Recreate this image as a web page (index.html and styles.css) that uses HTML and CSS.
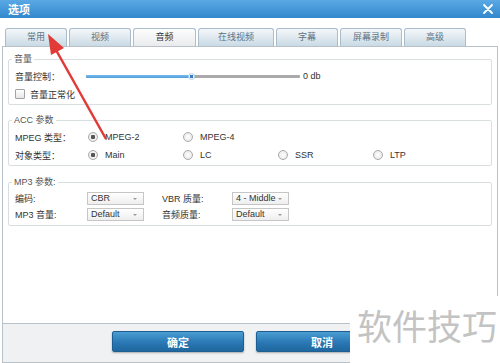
FILE: index.html
```html
<!DOCTYPE html>
<html lang="zh-CN">
<head>
    <meta charset="UTF-8">
    <meta name="viewport" content="width=device-width, initial-scale=1.0">
    <title>选项</title>
    <link rel="stylesheet" href="styles.css">
</head>
<body>
    <div class="dialog">
        <div class="titlebar">
            <span class="title">选项</span>
            <svg class="close" width="10" height="10" viewBox="0 0 10 10">
                <path d="M1 1 L9 9 M9 1 L1 9" stroke="#ffffff" stroke-width="1.8" stroke-linecap="round"/>
            </svg>
        </div>

        <div class="main">
            <div class="tabs">
                <div class="tab">常用</div>
                <div class="tab">视频</div>
                <div class="tab active">音频</div>
                <div class="tab wide">在线视频</div>
                <div class="tab">字幕</div>
                <div class="tab">屏幕录制</div>
                <div class="tab">高级</div>
            </div>

            <div class="panel">
                <fieldset class="group group-vol">
                    <legend>音量</legend>
                    <div class="row">
                        <span class="label">音量控制：</span>
                        <div class="slider">
                            <div class="fill"></div>
                            <div class="thumb"></div>
                        </div>
                        <span class="db">0 db</span>
                    </div>
                    <div class="row">
                        <span class="checkbox"></span>
                        <span class="check-text">音量正常化</span>
                    </div>
                </fieldset>

                <fieldset class="group group-acc">
                    <legend>ACC 参数</legend>
                    <div class="row">
                        <span class="label">MPEG 类型：</span>
                        <div class="opts">
                            <span class="opt"><span class="radio checked"></span>MPEG-2</span>
                            <span class="opt"><span class="radio"></span>MPEG-4</span>
                        </div>
                    </div>
                    <div class="row">
                        <span class="label">对象类型：</span>
                        <div class="opts">
                            <span class="opt"><span class="radio checked"></span>Main</span>
                            <span class="opt"><span class="radio"></span>LC</span>
                            <span class="opt"><span class="radio"></span>SSR</span>
                            <span class="opt"><span class="radio"></span>LTP</span>
                        </div>
                    </div>
                </fieldset>

                <fieldset class="group group-mp3">
                    <legend>MP3 参数:</legend>
                    <div class="row row-mp3">
                        <span class="label">编码:</span>
                        <span class="select">CBR</span>
                        <span class="label label2">VBR 质量:</span>
                        <span class="select">4 - Middle</span>
                    </div>
                    <div class="row row-mp3">
                        <span class="label">MP3 音量:</span>
                        <span class="select">Default</span>
                        <span class="label label2">音频质量:</span>
                        <span class="select">Default</span>
                    </div>
                </fieldset>
            </div>
        </div>

        <div class="footer">
            <button class="btn">确定</button>
            <button class="btn">取消</button>
        </div>

        <div class="watermark">软件技巧</div>

        <!-- red annotation arrow pointing at the first tab -->
        <svg class="arrow" width="500" height="363" viewBox="0 0 500 363">
            <line x1="106" y1="139" x2="56" y2="50" stroke="#e23a36" stroke-width="2.5"/>
            <polygon points="48,34 64,48 51,55" fill="#e23a36"/>
        </svg>
    </div>
</body>
</html>
```

FILE: styles.css
```css
* {
    margin: 0;
    padding: 0;
    box-sizing: border-box;
}

body {
    font-family: "Liberation Sans", "Noto Sans CJK SC", sans-serif;
    font-size: 9px;
    color: #333333;
    background: #ffffff;
    width: 500px;
    height: 363px;
    overflow: hidden;
}

.dialog {
    position: relative;
    width: 500px;
    height: 363px;
    background: #ffffff;
}

.titlebar {
    height: 18px;
    background: linear-gradient(#5aa8e4, #3188cd);
    display: flex;
    align-items: center;
    justify-content: space-between;
    padding: 0 7px 0 8px;
}

.title {
    color: #ffffff;
    font-size: 11px;
    font-weight: bold;
    font-family: "Noto Sans CJK SC", sans-serif;
}

.main {
    padding-top: 10px;
}

.tabs {
    display: flex;
    gap: 2px;
    margin-left: 5px;
    height: 18px;
}

.tab {
    width: 62px;
    height: 18px;
    line-height: 17px;
    text-align: center;
    color: #607383;
    border: 1px solid #aabdcb;
    border-bottom: none;
    border-radius: 3px 3px 0 0;
    background: linear-gradient(#f4f7f9, #c9dae5);
}

.tab.active {
    width: 63px;
    color: #333333;
    background: linear-gradient(#fdfdfd, #e8ebed);
}

.tab.wide {
    width: 76px;
}

.panel {
    height: 278px;
    margin: 0 2px;
    border: 1px solid #b9c2c8;
    padding: 6px 5px 0 5px;
}

.group {
    border: 1px solid #d9dee1;
    border-radius: 2px;
    padding: 2px 0 1px 6px;
}

.group legend {
    margin-left: -3px;
    padding: 0 2px;
    line-height: 12px;
    color: #555555;
}

.group-acc {
    margin-top: 9px;
}

.group-mp3 {
    margin-top: 10px;
    padding-bottom: 3px;
}

.row {
    display: flex;
    align-items: center;
    height: 18px;
}

.row-mp3 {
    height: 16px;
}

.label {
    width: 71px;
    flex-shrink: 0;
}

.slider {
    position: relative;
    width: 214px;
    height: 3px;
    background: #aaaaaa;
    border-radius: 1px;
}

.fill {
    width: 106px;
    height: 3px;
    background: linear-gradient(#7bbbec, #4c9ddd);
    border-radius: 1px;
}

.thumb {
    position: absolute;
    left: 102px;
    top: -2px;
    width: 7px;
    height: 7px;
    border-radius: 50%;
    background: radial-gradient(circle, #3a7cc4 0 1.5px, #eaf3fb 2px);
    border: 1px solid #b7d3ea;
}

.db {
    margin-left: 3px;
}

.checkbox {
    width: 10px;
    height: 10px;
    border: 1px solid #a4a4a4;
    border-radius: 1px;
    background: linear-gradient(#ffffff, #e6e6e6);
    margin-right: 5px;
}

.opts {
    display: flex;
    padding-left: 2px;
}

.opt {
    display: flex;
    align-items: center;
    width: 95px;
}

.radio {
    width: 10px;
    height: 10px;
    border-radius: 50%;
    border: 1px solid #aaaaaa;
    background: radial-gradient(circle, #ffffff, #e2e2e2);
    margin-right: 7px;
}

.radio.checked {
    background: radial-gradient(circle, #555555 0 2px, #f4f4f4 2.5px, #dedede);
}

.select {
    position: relative;
    width: 57px;
    height: 13px;
    line-height: 11px;
    margin-left: 1px;
    padding-left: 3px;
    border: 1px solid #c6c6c6;
    background: linear-gradient(#ffffff, #eeeeee);
    flex-shrink: 0;
}

.select::after {
    content: "";
    position: absolute;
    right: 6px;
    top: 5px;
    border-left: 2px solid transparent;
    border-right: 2px solid transparent;
    border-top: 2px solid #999999;
}

.label2 {
    width: 70px;
    margin-left: 18px;
}

.label2 + .select {
    margin-left: 0;
}

.footer {
    height: 39px;
    margin: 0 2px;
    border: 1px solid #b9c2c8;
    border-top: none;
    background: #eff1f3;
    display: flex;
    justify-content: center;
    gap: 12px;
    padding-top: 7px;
}

.btn {
    width: 132px;
    height: 21px;
    border: 1px solid #1d5f93;
    border-radius: 2px;
    background: linear-gradient(#4a9dd2, #2a78b5 55%, #1f679f);
    color: #ffffff;
    font-family: "Noto Sans CJK SC", sans-serif;
    font-size: 11px;
    font-weight: bold;
    box-shadow: 0 1px 2px rgba(0, 0, 0, 0.3);
}

.watermark {
    position: absolute;
    left: 350px;
    top: 296px;
    width: 150px;
    height: 67px;
    background: #ffffff;
    color: #c3c3c3;
    font-family: "Noto Sans CJK SC", sans-serif;
    font-size: 35px;
    line-height: 58px;
    padding-left: 7px;
}

.arrow {
    position: absolute;
    left: 0;
    top: 0;
    pointer-events: none;
}
```
